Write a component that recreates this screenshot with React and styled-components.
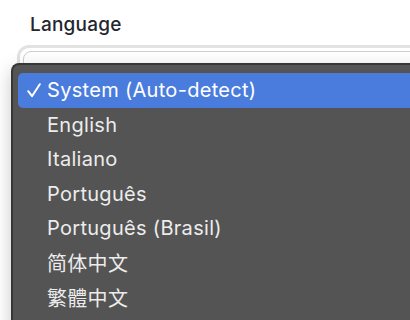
import React from "react";
import styled, { createGlobalStyle } from "styled-components";

const GlobalStyle = createGlobalStyle`
  html, body {
    margin: 0;
    padding: 0;
    background: #ffffff;
    overflow: hidden;
  }
  body {
    font-family: Inter, "Noto Sans CJK SC", sans-serif;
  }
`;

const Page = styled.div`
  position: relative;
  width: 410px;
  height: 320px;
  overflow: hidden;
`;

const Field = styled.div`
  display: flex;
  flex-direction: column;
  gap: 9px;
  padding: 14px 0 0 17px;
`;

const Label = styled.label`
  padding-left: 13px;
  font-size: 19px;
  line-height: 22px;
  font-weight: 500;
  color: #23262e;
  letter-spacing: 0.2px;
`;

const SelectBox = styled.div`
  width: 420px;
  height: 42px;
  border: 3px solid #e2e2e2;
  border-radius: 12px;
  box-sizing: border-box;
  padding: 3px;
  &::after {
    content: "";
    display: block;
    height: 100%;
    border: 1px solid #cfcfcf;
    border-radius: 8px;
  }
`;

const Menu = styled.ul`
  position: absolute;
  top: 63px;
  left: 11px;
  width: 420px;
  margin: 0;
  padding: 8px 0 0 5px;
  list-style: none;
  background: #545454;
  border: 2px solid #363636;
  border-right: none;
  border-radius: 8px 0 0 0;
  box-shadow: 0 6px 18px rgba(0, 0, 0, 0.22);
  height: 300px;
  box-sizing: border-box;
`;

const Item = styled.li`
  display: flex;
  align-items: center;
  height: 34.5px;
  padding-left: 9px;
  font-size: 20px;
  letter-spacing: 0.3px;
  color: ${({ selected }) => (selected ? "#ffffff" : "#ececec")};
  background: ${({ selected }) => (selected ? "#4a7cdd" : "transparent")};
  border-radius: 5px 0 0 5px;
  white-space: nowrap;
`;

const Check = styled.span`
  display: flex;
  align-items: center;
  width: 20px;
  flex-shrink: 0;
`;

const CheckMark = () => (
  <svg width="14" height="15" viewBox="0 0 14 15" fill="none">
    <path
      d="M1.2 8.2 L5 13.2 L12.8 1.2"
      stroke="#ffffff"
      strokeWidth="2"
      strokeLinecap="round"
      strokeLinejoin="round"
    />
  </svg>
);

const languages = [
  "System (Auto-detect)",
  "English",
  "Italiano",
  "Português",
  "Português (Brasil)",
  "简体中文",
  "繁體中文",
];

export default function App() {
  return (
    <Page>
      <GlobalStyle />
      <Field>
        <Label>Language</Label>
        <SelectBox />
      </Field>
      <Menu>
        {languages.map((l, i) => (
          <Item key={l} selected={i === 0}>
            <Check>{i === 0 && <CheckMark />}</Check>
            {l}
          </Item>
        ))}
      </Menu>
    </Page>
  );
}
